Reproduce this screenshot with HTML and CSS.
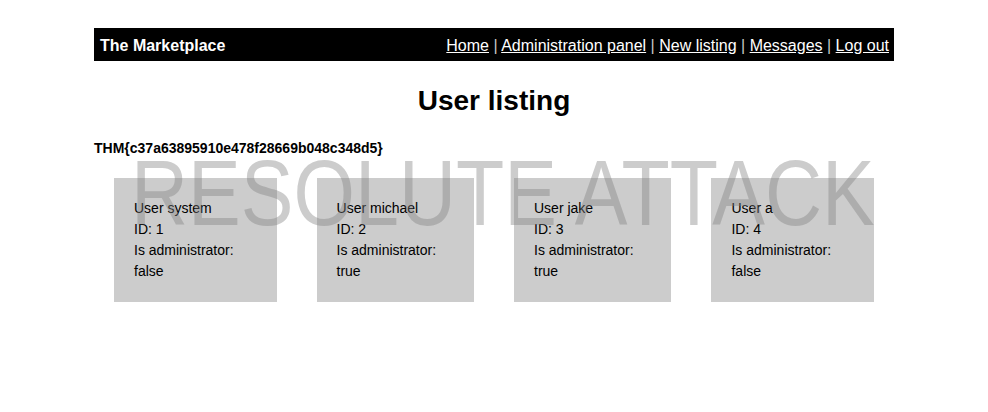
FILE: index.html
```html
<!DOCTYPE html>
<html lang="en">
<head>
<meta charset="utf-8">
<title>User listing</title>
<link rel="stylesheet" href="styles.css">
</head>
<body>
<div class="page">
  <header class="bar">
    <span class="brand">The Marketplace</span>
    <nav class="nav"><a href="#">Home</a> <span class="sep">|</span> <a href="#">Administration panel</a> <span class="sep">|</span> <a href="#">New listing</a> <span class="sep">|</span> <a href="#">Messages</a> <span class="sep">|</span> <a href="#">Log out</a></nav>
  </header>
  <h1 class="title">User listing</h1>
  <p class="flag">THM{c37a63895910e478f28669b048c348d5}</p>
  <div class="users">
    <div class="card">User system<br>ID: 1<br>Is administrator: false</div>
    <div class="card">User michael<br>ID: 2<br>Is administrator: true</div>
    <div class="card">User jake<br>ID: 3<br>Is administrator: true</div>
    <div class="card">User a<br>ID: 4<br>Is administrator: false</div>
  </div>
</div>
<div class="watermark">RESOLUTE ATTACK</div>
</body>
</html>
```
FILE: styles.css
```css
html, body {
  margin: 0;
  padding: 0;
  background: #fff;
}
body {
  font-family: "Liberation Sans", Arial, sans-serif;
  color: #000;
}
.page {
  width: 800px;
  margin: 28px auto 0;
}
.bar {
  display: flex;
  justify-content: space-between;
  align-items: baseline;
  background: #000;
  color: #fff;
  padding: 9px 5px 6px 6px;
  font-size: 16px;
  line-height: 18px;
}
.brand {
  font-weight: bold;
}
.nav a {
  color: #fff;
  text-decoration: underline;
}
.sep {
  color: #c8c8c8;
}
.title {
  margin: 24px 0 0;
  font-size: 28px;
  line-height: 32px;
  font-weight: bold;
  text-align: center;
}
.flag {
  margin: 23px 0 0;
  font-size: 14px;
  line-height: 16px;
  font-weight: bold;
}
.users {
  display: flex;
  margin-top: 22px;
}
.card {
  margin: 0 20px;
  padding: 20px;
  background: #ccc;
  font-size: 14px;
  line-height: 21px;
}
.watermark {
  position: absolute;
  left: 131px;
  top: 147px;
  font-size: 93px;
  line-height: 93px;
  white-space: nowrap;
  color: rgba(128, 128, 128, 0.4);
  transform: scaleX(0.85);
  transform-origin: left top;
  pointer-events: none;
}
```
